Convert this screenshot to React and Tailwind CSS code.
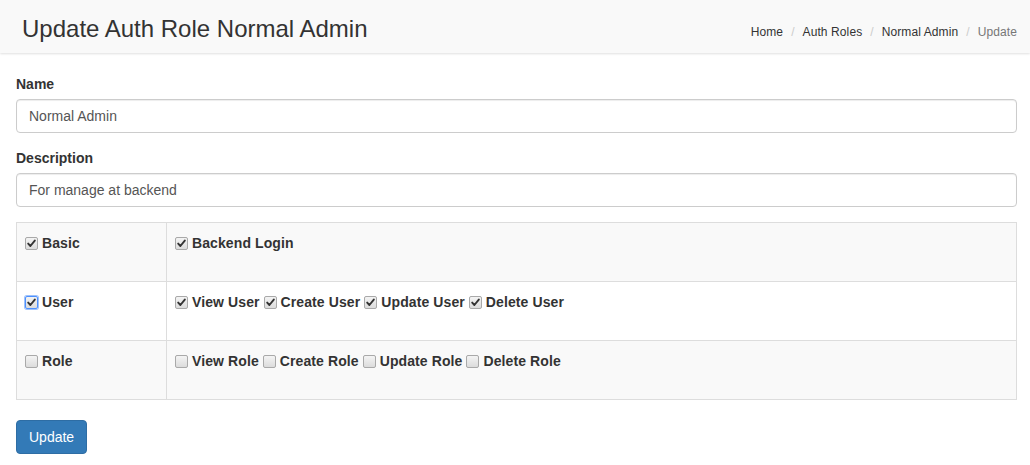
import React, { useState } from 'react';

function Check({ checked, focused }) {
  return (
    <span
      className={`inline-flex items-center justify-center w-[13px] h-[13px] rounded-[2px] border bg-gradient-to-b from-[#f4f4f4] to-[#dcdcdc] align-[-2px] shrink-0 ${
        focused ? 'border-[#4d90fe] ring-1 ring-[#9ec2fb]' : 'border-[#a9a9a9]'
      }`}
    >
      {checked && (
        <svg width="9" height="9" viewBox="0 0 9 9">
          <path d="M1.2 4.6 L3.4 7 L7.8 1.6" fill="none" stroke="#333" strokeWidth="1.9" strokeLinecap="round" strokeLinejoin="round" />
        </svg>
      )}
    </span>
  );
}

function Item({ label, checked, focused }) {
  return (
    <label className="inline-flex items-center gap-[4px] font-bold tracking-[0.1px] mr-[4px]">
      <Check checked={checked} focused={focused} />
      {label}
    </label>
  );
}

const groups = [
  { name: 'Basic', checked: true, items: [['Backend Login', true]] },
  {
    name: 'User',
    checked: true,
    focused: true,
    items: [
      ['View User', true],
      ['Create User', true],
      ['Update User', true],
      ['Delete User', true],
    ],
  },
  {
    name: 'Role',
    checked: false,
    items: [
      ['View Role', false],
      ['Create Role', false],
      ['Update Role', false],
      ['Delete Role', false],
    ],
  },
];

export default function App() {
  const [name, setName] = useState('Normal Admin');
  const [desc, setDesc] = useState('For manage at backend');

  return (
    <div className="min-h-[465px] bg-white text-[14px] text-[#333] font-['Liberation_Sans',Arial,sans-serif]">
      {/* Header */}
      <div className="h-[53px] bg-[#f9f9f9] shadow-[0_1px_2px_rgba(0,0,0,0.12)] flex items-center justify-between pl-[22px] pr-[13px]">
        <h1 className="text-[24px] leading-none text-[#333] pt-[4px]">Update Auth Role Normal Admin</h1>
        <ol className="flex items-center text-[12px] tracking-[0.1px] pt-[10px]">
          <li className="text-[#333]">Home</li>
          <li className="px-[8px] text-[#ccc]">/</li>
          <li className="text-[#333]">Auth Roles</li>
          <li className="px-[8px] text-[#ccc]">/</li>
          <li className="text-[#333]">Normal Admin</li>
          <li className="px-[8px] text-[#ccc]">/</li>
          <li className="text-[#777]">Update</li>
        </ol>
      </div>

      {/* Form */}
      <div className="px-[16px] pt-[21px] pr-[13px]">
        <label className="block font-bold leading-[20px] mb-[5px]">Name</label>
        <input
          value={name}
          onChange={(e) => setName(e.target.value)}
          className="block w-full h-[34px] px-[12px] border border-[#ccc] rounded-[4px] text-[#555] text-[14px] shadow-[inset_0_1px_1px_rgba(0,0,0,0.075)] outline-none"
        />
        <label className="block font-bold leading-[20px] mt-[15px] mb-[5px]">Description</label>
        <input
          value={desc}
          onChange={(e) => setDesc(e.target.value)}
          className="block w-full h-[34px] px-[12px] border border-[#ccc] rounded-[4px] text-[#555] text-[14px] shadow-[inset_0_1px_1px_rgba(0,0,0,0.075)] outline-none"
        />

        <table className="w-full mt-[15px] border-collapse border border-[#ddd]">
          <tbody>
            {groups.map((g, i) => (
              <tr key={g.name} className={`h-[59px] ${i % 2 === 0 ? 'bg-[#f9f9f9]' : 'bg-white'}`}>
                <td className="w-[150px] border border-[#ddd] align-top px-[8px] pt-[10px]">
                  <Item label={g.name} checked={g.checked} focused={g.focused} />
                </td>
                <td className="border border-[#ddd] align-top px-[8px] pt-[10px]">
                  {g.items.map(([label, checked]) => (
                    <Item key={label} label={label} checked={checked} />
                  ))}
                </td>
              </tr>
            ))}
          </tbody>
        </table>

        <button className="mt-[20px] h-[34px] px-[12px] bg-[#337ab7] border border-[#2e6da4] rounded-[4px] text-white text-[14px]">
          Update
        </button>
      </div>
    </div>
  );
}
